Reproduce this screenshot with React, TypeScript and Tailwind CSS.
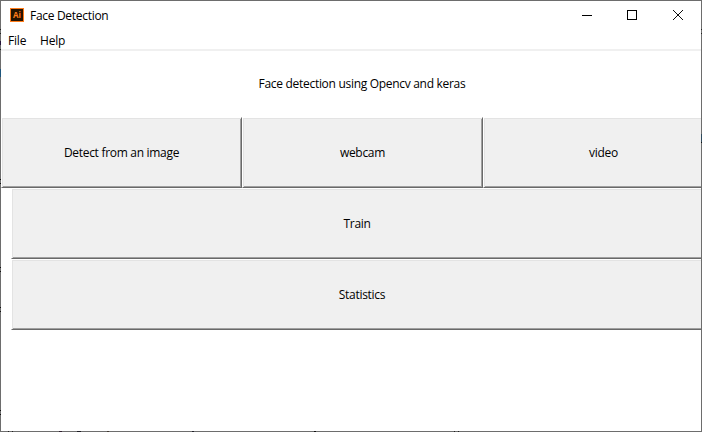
import React from "react";

const bevel =
  "flex items-center justify-center border border-t-white border-l-white border-r-[#696969] border-b-[#696969] bg-[#f0f0f0] shadow-[inset_1px_1px_0_#e3e3e3,inset_-1px_-1px_0_#a0a0a0]";

type ButtonProps = { label: string; size: string; text: string };

function BevelButton({ label, size, text }: ButtonProps) {
  return (
    <button className={`${bevel} h-[71px] shrink-0 ${size}`}>
      <span className={text}>{label}</span>
    </button>
  );
}

// Dark specks of the desktop showing through the translucent frame.
const specks = [
  "left-0 top-[29px] h-px w-px bg-[#202020]",
  "left-0 top-[33px] h-px w-px bg-[#202020]",
  "left-0 top-[41px] h-1 w-px bg-[#24143a]",
  "left-0 top-[49px] h-px w-px bg-[#202020]",
  "left-0 top-[69px] h-2 w-px bg-[#1d557c]",
  "left-0 top-[179px] h-px w-px bg-[#101010]",
  "left-0 top-[183px] h-px w-px bg-[#101010]",
  "left-0 top-[267px] h-px w-px bg-[#101010]",
  "left-0 top-[271px] h-px w-px bg-[#101010]",
  "left-0 top-[307px] h-px w-px bg-[#101010]",
  "left-0 top-[311px] h-px w-px bg-[#101010]",
  "left-0 top-[410px] h-px w-px bg-[#101010]",
  "left-0 top-[414px] h-px w-px bg-[#101010]",
  "right-0 top-[29px] h-px w-px bg-[#202020]",
  "right-0 top-[33px] h-px w-px bg-[#202020]",
  "right-0 top-[134px] h-2 w-px bg-[#2f4a5c]",
  "right-0 top-[142px] h-px w-px bg-[#101010]",
  "bottom-0 left-[8px] h-px w-px bg-[#202020]",
  "bottom-0 left-[12px] h-px w-px bg-[#202020]",
  "bottom-0 left-[59px] h-px w-[3px] bg-[#302030]",
  "bottom-0 left-[77px] h-px w-1 bg-[#1c1c24]",
  "bottom-0 left-[107px] h-px w-[2px] bg-[#403830]",
  "bottom-0 left-[192px] h-px w-[2px] bg-[#202028]",
  "bottom-0 left-[314px] h-px w-[2px] bg-[#101010]",
  "bottom-0 left-[454px] h-px w-px bg-[#202020]",
  "bottom-0 left-[458px] h-px w-px bg-[#202020]",
];

export default function App() {
  return (
    <div className="relative flex h-[432px] w-[702px] flex-col overflow-hidden bg-white p-px font-['Open_Sans','Noto_Sans',sans-serif] text-[12px] leading-4 whitespace-nowrap text-black">
      <header className="flex h-[30px] shrink-0 items-center pl-[9px]">
        <svg width="14" height="14" viewBox="0 0 14 14" className="mb-[2px] shrink-0">
          <rect x="0.5" y="0.5" width="13" height="13" fill="#261300" stroke="#ff7c1a" />
          <text x="3" y="10" fontSize="8.5" fontWeight="700" fontFamily="Open Sans" textLength="8" lengthAdjust="spacingAndGlyphs" fill="#ff7c1a">Ai</text>
        </svg>
        <h1 className="ml-[6px] flex-1 tracking-[-0.3px]">Face Detection</h1>
        <div className="flex h-full items-center" aria-label="Window controls">
          <svg width="138" height="30" viewBox="563 1 138 30" fill="none" stroke="#000" shapeRendering="crispEdges">
            <path d="M582 15.5h10" />
            <rect x="627.5" y="10.5" width="9" height="9" />
            <path d="M673 10l10 10M683 10l-10 10" shapeRendering="auto" strokeWidth="0.95" />
          </svg>
        </div>
      </header>
      <nav className="flex h-5 shrink-0 items-center gap-[14px] border-b-2 border-[#f0f0f0] pt-[2px] pl-[7px]">
        <span className="w-[18px] tracking-[-0.2px]">File</span>
        <span className="tracking-[-0.2px]">Help</span>
      </nav>
      <div className="flex h-[66px] shrink-0 items-center justify-center pl-[22px]">
        <span className="tracking-[-0.3px]">Face detection using Opencv and keras</span>
      </div>
      <div className="flex shrink-0">
        <BevelButton label="Detect from an image" size="w-[241px]" text="tracking-[-0.3px]" />
        <BevelButton label="webcam" size="w-[241px]" text="tracking-[-0.3px]" />
        <BevelButton label="video" size="w-[241px]" text="tracking-[-0.3px]" />
      </div>
      <div className="flex shrink-0 flex-col pl-[10px]">
        <BevelButton label="Train" size="w-[692px]" text="tracking-[-0.35px]" />
        <BevelButton label="Statistics" size="w-[702px]" text="tracking-[-0.3px]" />
      </div>
      <div className="pointer-events-none absolute inset-0 border border-[#6d6d6d]" />
      <div className="pointer-events-none absolute inset-0">
        {specks.map((s) => (
          <i key={s} className={`absolute ${s}`} />
        ))}
      </div>
    </div>
  );
}
